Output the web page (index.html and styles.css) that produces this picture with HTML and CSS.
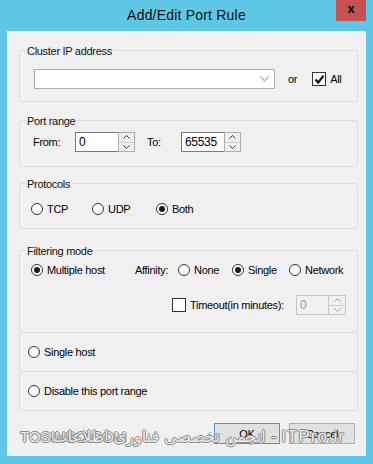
FILE: index.html
```html
<!DOCTYPE html>
<html lang="en">
<head>
    <meta charset="UTF-8">
    <title>Add/Edit Port Rule</title>
    <link rel="stylesheet" href="styles.css">
</head>
<body>
    <div class="window">
        <div class="titlebar">
            <span></span>
            <div class="title">Add/Edit Port Rule</div>
            <div class="close">x</div>
        </div>
        <div class="client">
            <div class="group cluster">
                <div class="group-title">Cluster IP address</div>
                <div class="row cluster-row">
                    <div class="combo">
                        <svg width="9" height="6" viewBox="0 0 9 6"><polyline points="0.5,0.5 4.5,5 8.5,0.5" fill="none" stroke="#b4b4b4" stroke-width="1.2"/></svg>
                    </div>
                    <span class="or">or</span>
                    <span class="check on">
                        <svg width="11" height="11" viewBox="0 0 11 11"><polyline points="1.5,5.5 4.2,8.5 9.5,1.8" fill="none" stroke="#111" stroke-width="2.2"/></svg>
                    </span>
                    <span>All</span>
                </div>
            </div>

            <div class="group port">
                <div class="group-title">Port range</div>
                <div class="row port-row">
                    <span class="lbl-from">From:</span>
                    <div class="spin">
                        <div class="spin-field">0</div>
                        <div class="spin-btns">
                            <span><svg width="7" height="4" viewBox="0 0 7 4"><polyline points="0.5,3.5 3.5,0.5 6.5,3.5" fill="none" stroke="#333" stroke-width="1"/></svg></span>
                            <span><svg width="7" height="4" viewBox="0 0 7 4"><polyline points="0.5,0.5 3.5,3.5 6.5,0.5" fill="none" stroke="#333" stroke-width="1"/></svg></span>
                        </div>
                    </div>
                    <span class="lbl-to">To:</span>
                    <div class="spin">
                        <div class="spin-field">65535</div>
                        <div class="spin-btns">
                            <span><svg width="7" height="4" viewBox="0 0 7 4"><polyline points="0.5,3.5 3.5,0.5 6.5,3.5" fill="none" stroke="#333" stroke-width="1"/></svg></span>
                            <span><svg width="7" height="4" viewBox="0 0 7 4"><polyline points="0.5,0.5 3.5,3.5 6.5,0.5" fill="none" stroke="#333" stroke-width="1"/></svg></span>
                        </div>
                    </div>
                </div>
            </div>

            <div class="group protocols">
                <div class="group-title">Protocols</div>
                <div class="row proto-row">
                    <label class="opt"><span class="radio"></span>TCP</label>
                    <label class="opt"><span class="radio"></span>UDP</label>
                    <label class="opt"><span class="radio on"></span>Both</label>
                </div>
            </div>

            <div class="group filtering">
                <div class="group-title">Filtering mode</div>
                <div class="row filter-row">
                    <label class="opt"><span class="radio on"></span>Multiple host</label>
                    <span>Affinity:</span>
                    <label class="opt"><span class="radio"></span>None</label>
                    <label class="opt"><span class="radio on"></span>Single</label>
                    <label class="opt"><span class="radio"></span>Network</label>
                </div>
                <div class="row timeout-row">
                    <span class="check"></span>
                    <span class="timeout-lbl">Timeout(in minutes):</span>
                    <div class="spin disabled">
                        <div class="spin-field">0</div>
                        <div class="spin-btns">
                            <span><svg width="7" height="4" viewBox="0 0 7 4"><polyline points="0.5,3.5 3.5,0.5 6.5,3.5" fill="none" stroke="#9a9a9a" stroke-width="1"/></svg></span>
                            <span><svg width="7" height="4" viewBox="0 0 7 4"><polyline points="0.5,0.5 3.5,3.5 6.5,0.5" fill="none" stroke="#9a9a9a" stroke-width="1"/></svg></span>
                        </div>
                    </div>
                </div>
            </div>

            <div class="group plain">
                <div class="row single-row">
                    <label class="opt"><span class="radio"></span>Single host</label>
                </div>
            </div>

            <div class="group plain">
                <div class="row single-row">
                    <label class="opt"><span class="radio"></span>Disable this port range</label>
                </div>
            </div>

            <div class="buttons">
                <button class="btn default">OK</button>
                <button class="btn">Cancel</button>
            </div>
        </div>

        <div class="watermark">
            <span class="wm-left">TOSINSO.COM</span>
            <span class="wm-right" dir="ltr"><bdi dir="rtl">انجمن تخصصی فناوری اطلاعات</bdi> <span class="wm-site">- ITPro.ir</span></span>
        </div>
    </div>
</body>
</html>
```

FILE: styles.css
```css
body {
    margin: 0;
    background: #5ec7e6;
    font-family: 'Liberation Sans', Arial, sans-serif;
    font-size: 11px;
    letter-spacing: -0.3px;
    color: #000;
}
.window {
    position: relative;
    width: 373px;
    height: 464px;
}
.titlebar {
    height: 31px;
    display: grid;
    grid-template-columns: 1fr auto 1fr;
}
.title {
    font-size: 14px;
    letter-spacing: 0.2px;
    line-height: 31px;
    color: #111;
}
.close {
    justify-self: end;
    margin-right: 7px;
    width: 30px;
    height: 21px;
    background: #c75050;
    color: #000;
    font-weight: bold;
    font-size: 13px;
    letter-spacing: 0;
    line-height: 18px;
    text-align: center;
}
.client {
    margin: 0 7px;
    height: 425px;
    box-sizing: border-box;
    background: #f0f0f0;
    padding: 19px 8px 11px 12px;
    display: flex;
    flex-direction: column;
}
.group {
    border: 1px solid #dcdcdc;
    border-radius: 3px;
}
.group-title {
    height: 14px;
    line-height: 14px;
    margin: -7px 0 -7px 5px;
    padding: 0 2px;
    width: fit-content;
    background: #f0f0f0;
    color: #111;
}
.row {
    display: flex;
    align-items: center;
    height: 20px;
}
.cluster { margin-bottom: 18px; }
.cluster-row { padding: 18px 0 12px 14px; }
.combo {
    box-sizing: border-box;
    width: 241px;
    height: 20px;
    border: 1px solid #abadb3;
    background: #fff;
    display: flex;
    align-items: center;
    justify-content: flex-end;
    padding-right: 5px;
    margin-right: 13px;
}
.or { margin-right: 15px; }
.check {
    box-sizing: border-box;
    width: 14px;
    height: 14px;
    border: 1px solid #333;
    background: #fff;
    margin-right: 4px;
    display: flex;
    align-items: center;
    justify-content: center;
}

.port { margin-bottom: 16px; }
.port-row { padding: 11px 0 14px 13px; }
.lbl-from { width: 42px; }
.lbl-to { width: 34px; margin-left: 12px; }
.spin {
    display: flex;
    height: 20px;
}
.spin-field {
    box-sizing: border-box;
    width: 43px;
    height: 20px;
    border: 1px solid #7a7a7a;
    border-right: none;
    background: #fff;
    padding-left: 3px;
    line-height: 18px;
    font-size: 12px;
}
.spin-btns {
    width: 17px;
    display: flex;
    flex-direction: column;
    border: 1px solid #acacac;
    box-sizing: border-box;
}
.spin-btns span {
    flex: 1;
    display: flex;
    align-items: center;
    justify-content: center;
    background: #f0f0f0;
}
.spin-btns span + span { border-top: 1px solid #d0d0d0; }
.spin.disabled .spin-field {
    width: 32px;
    border-color: #c8c8c8;
    background: #f0f0f0;
    color: #9a9a9a;
}
.spin.disabled .spin-btns { width: 18px; border-color: #c8c8c8; }

.protocols { margin-bottom: 21px; }
.proto-row {
    padding: 15px 0 9px 11px;
    display: grid;
    grid-template-columns: 61px 64px auto;
    align-items: center;
}
.opt {
    display: flex;
    align-items: center;
}
.radio {
    box-sizing: border-box;
    width: 12px;
    height: 12px;
    border: 1px solid #333;
    border-radius: 50%;
    background: #fff;
    margin-right: 4px;
    display: flex;
    align-items: center;
    justify-content: center;
}
.radio.on::after {
    content: "";
    width: 6px;
    height: 6px;
    border-radius: 50%;
    background: #1a1a1a;
}

.filter-row {
    padding: 9px 0 0 11px;
    display: grid;
    grid-template-columns: 104px 43px 54px 57px auto;
    align-items: center;
}
.timeout-row {
    margin-top: 15px;
    padding: 0 0 17px 152px;
}
.timeout-lbl { width: 106px; }

.plain { margin-top: -1px; }
.single-row { padding: 9px 0 9px 8px; }

.buttons {
    margin-top: 12px;
    display: flex;
    justify-content: flex-end;
    gap: 9px;
    padding-right: 3px;
}
.btn {
    width: 66px;
    height: 21px;
    box-sizing: border-box;
    border: 1px solid #adadad;
    background: #e1e1e1;
    font-family: inherit;
    font-size: 11px;
    letter-spacing: -0.3px;
    color: #000;
    padding: 0;
}
.btn.default { border-color: #5a8ec4; }

.watermark {
    position: absolute;
    left: 0;
    top: 427px;
    width: 373px;
    height: 22px;
    font-size: 15px;
    letter-spacing: 0;
    color: rgba(255, 255, 255, 0.85);
    text-shadow: -1px 0 #8a8a8a, 1px 0 #8a8a8a, 0 -1px #8a8a8a, 0 1px #8a8a8a;
    pointer-events: none;
}
.wm-left {
    position: absolute;
    left: 20px;
    top: 1px;
}
.wm-right {
    position: absolute;
    right: 28px;
    top: 0;
    font-family: 'DejaVu Sans', 'Liberation Sans', sans-serif;
    font-size: 16px;
    white-space: nowrap;
}
.wm-site {
    font-family: 'Liberation Sans', sans-serif;
    font-size: 17px;
    letter-spacing: 1px;
}
```
